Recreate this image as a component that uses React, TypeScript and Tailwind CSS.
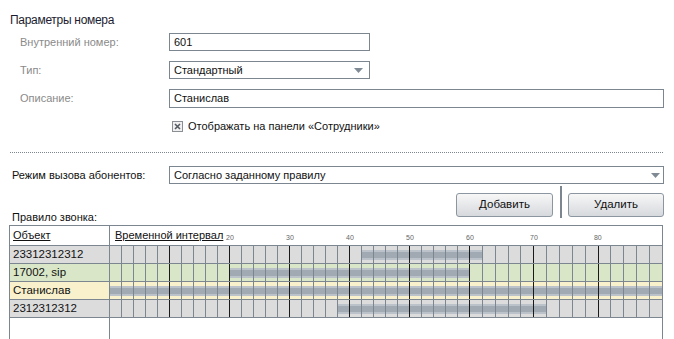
import React from "react";

type Row = { name: string; bg: string; from: number; to: number };

// bars are given in grid cells (each cell = 2 units on the ruler)
const rows: Row[] = [
  { name: "23312312312", bg: "bg-[#dcdcdc]", from: 21, to: 30 },
  { name: "17002, sip", bg: "bg-[#d9e7c8]", from: 10, to: 29 },
  { name: "Станислав", bg: "bg-[#f8f1cb]", from: 0, to: 44 },
  { name: "2312312312", bg: "bg-[#dcdcdc]", from: 19, to: 35 },
];

const cells = Array.from({ length: 45 }, (_, i) => i);

function cellClass(i: number) {
  const size = i < 30 ? "w-[12px] shrink-0" : "flex-1 min-w-0";
  if (i === 44) return size;
  return i % 5 === 4
    ? `${size} border-r border-r-[#1a1a1a]`
    : `${size} border-r border-r-[#7b8691]`;
}

function Arrow() {
  return (
    <svg width="9" height="5" viewBox="0 0 9 5">
      <path d="M0 0H9L4.5 5Z" fill="#7f8a95" />
    </svg>
  );
}

export default function App() {
  return (
    <div className="w-[674px] h-[339px] overflow-hidden bg-white text-[11px] text-[#111] [font-family:'Liberation_Sans',Arial,sans-serif]">
      <div className="pt-[13px] pl-[10px] leading-[14px] text-[12px] text-[#1c1c30] tracking-[-0.3px]">Параметры номера</div>

      {/* number params */}
      <div className="mt-[6px] flex flex-col gap-[10px]">
        <div className="flex items-center h-[18px]">
          <div className="w-[169px] pl-[20px] text-[#8a8a8a]">Внутренний номер:</div>
          <div className="w-[201px] h-[18px] border border-[#7b8691] pl-[4px] leading-[16px]">601</div>
        </div>
        <div className="flex items-center h-[18px]">
          <div className="w-[169px] pl-[20px] text-[#8a8a8a]">Тип:</div>
          <div className="w-[201px] h-[18px] border border-[#7b8691] pl-[4px] pr-[6px] flex items-center justify-between">
            <span>Стандартный</span>
            <Arrow />
          </div>
        </div>
        <div className="flex items-center h-[18px]">
          <div className="w-[169px] pl-[20px] text-[#8a8a8a]">Описание:</div>
          <div className="w-[495px] h-[19px] border border-[#7b8691] pl-[4px] leading-[17px]">Станислав</div>
        </div>
      </div>

      <div className="mt-[12px] h-[14px] pl-[172px] flex items-center gap-[5px]">
        <div className="w-[11px] h-[11px] border border-[#8a8f96] bg-[#f0f0f0] flex items-center justify-center">
          <svg width="7" height="7" viewBox="0 0 7 7">
            <path d="M1 1L6 6M6 1L1 6" stroke="#555b62" strokeWidth="1.6" />
          </svg>
        </div>
        <span>Отображать на панели «Сотрудники»</span>
      </div>

      <div className="mt-[19px] ml-[10px] w-[653px] border-t border-dotted border-[#7b8691]" />

      <div className="mt-[13px] flex items-center h-[18px]">
        <div className="w-[169px] pl-[12px]">Режим вызова абонентов:</div>
        <div className="w-[495px] h-[18px] border border-[#7b8691] pl-[4px] pr-[3px] flex items-center justify-between">
          <span>Согласно заданному правилу</span>
          <Arrow />
        </div>
      </div>

      <div className="mt-[2px] h-[39px] flex justify-between pl-[12px] w-[664px]">
        <div className="self-end leading-[14px] pb-[1px]">Правило звонка:</div>
        <div className="flex items-start">
          <button className="mt-[7px] w-[97px] h-[24px] rounded-[3px] border border-[#8b96a1] bg-gradient-to-b from-[#f7f7f7] to-[#d6d9dd] text-[11.5px]">
            Добавить
          </button>
          <div className="ml-[7px] mr-[6px] w-[2px] h-[32px] bg-[#7b8691]" />
          <button className="mt-[7px] w-[96px] h-[24px] rounded-[3px] border border-[#8b96a1] bg-gradient-to-b from-[#f7f7f7] to-[#d6d9dd] text-[11.5px]">
            Удалить
          </button>
        </div>
      </div>

      {/* call rule table */}
      <div className="ml-[9px] w-[654px] h-[140px] border border-[#7b8691] flex flex-col">
        <div className="flex h-[20px] border-b border-[#7b8691] shrink-0">
          <div className="w-[100px] shrink-0 border-r border-[#7b8691] pl-[3px] leading-[18px]">
            <span className="underline">Объект</span>
          </div>
          <div className="relative flex-1 flex">
            {cells.map((i) => (
              <div key={i} className={`relative ${i < 30 ? "w-[12px] shrink-0" : "flex-1 min-w-0"}`}>
                {i >= 10 && i % 5 === 0 && (
                  <span className="absolute left-[-4px] bottom-[4px] text-[7px] leading-[7px] text-[#666]">
                    {i * 2}
                  </span>
                )}
              </div>
            ))}
            <span className="absolute left-[5px] top-0 leading-[18px] underline">Временной интервал</span>
          </div>
        </div>

        {rows.map((r) => (
          <div key={r.name} className={`flex h-[18px] border-b border-[#7b8691] shrink-0 ${r.bg}`}>
            <div className="w-[100px] shrink-0 border-r border-[#7b8691] pl-[3px] leading-[17px] text-[11.5px]">{r.name}</div>
            <div className="flex-1 flex">
              {cells.map((i) => (
                <div key={i} className={`${cellClass(i)} flex items-center`}>
                  {i >= r.from && i <= r.to && (
                    <div className="w-full h-[10px] border-y-2 border-[#bcc2c9] bg-[#a1a9b3]" />
                  )}
                </div>
              ))}
            </div>
          </div>
        ))}

        <div className="flex flex-1">
          <div className="w-[100px] shrink-0 border-r border-[#7b8691]" />
        </div>
      </div>
    </div>
  );
}
